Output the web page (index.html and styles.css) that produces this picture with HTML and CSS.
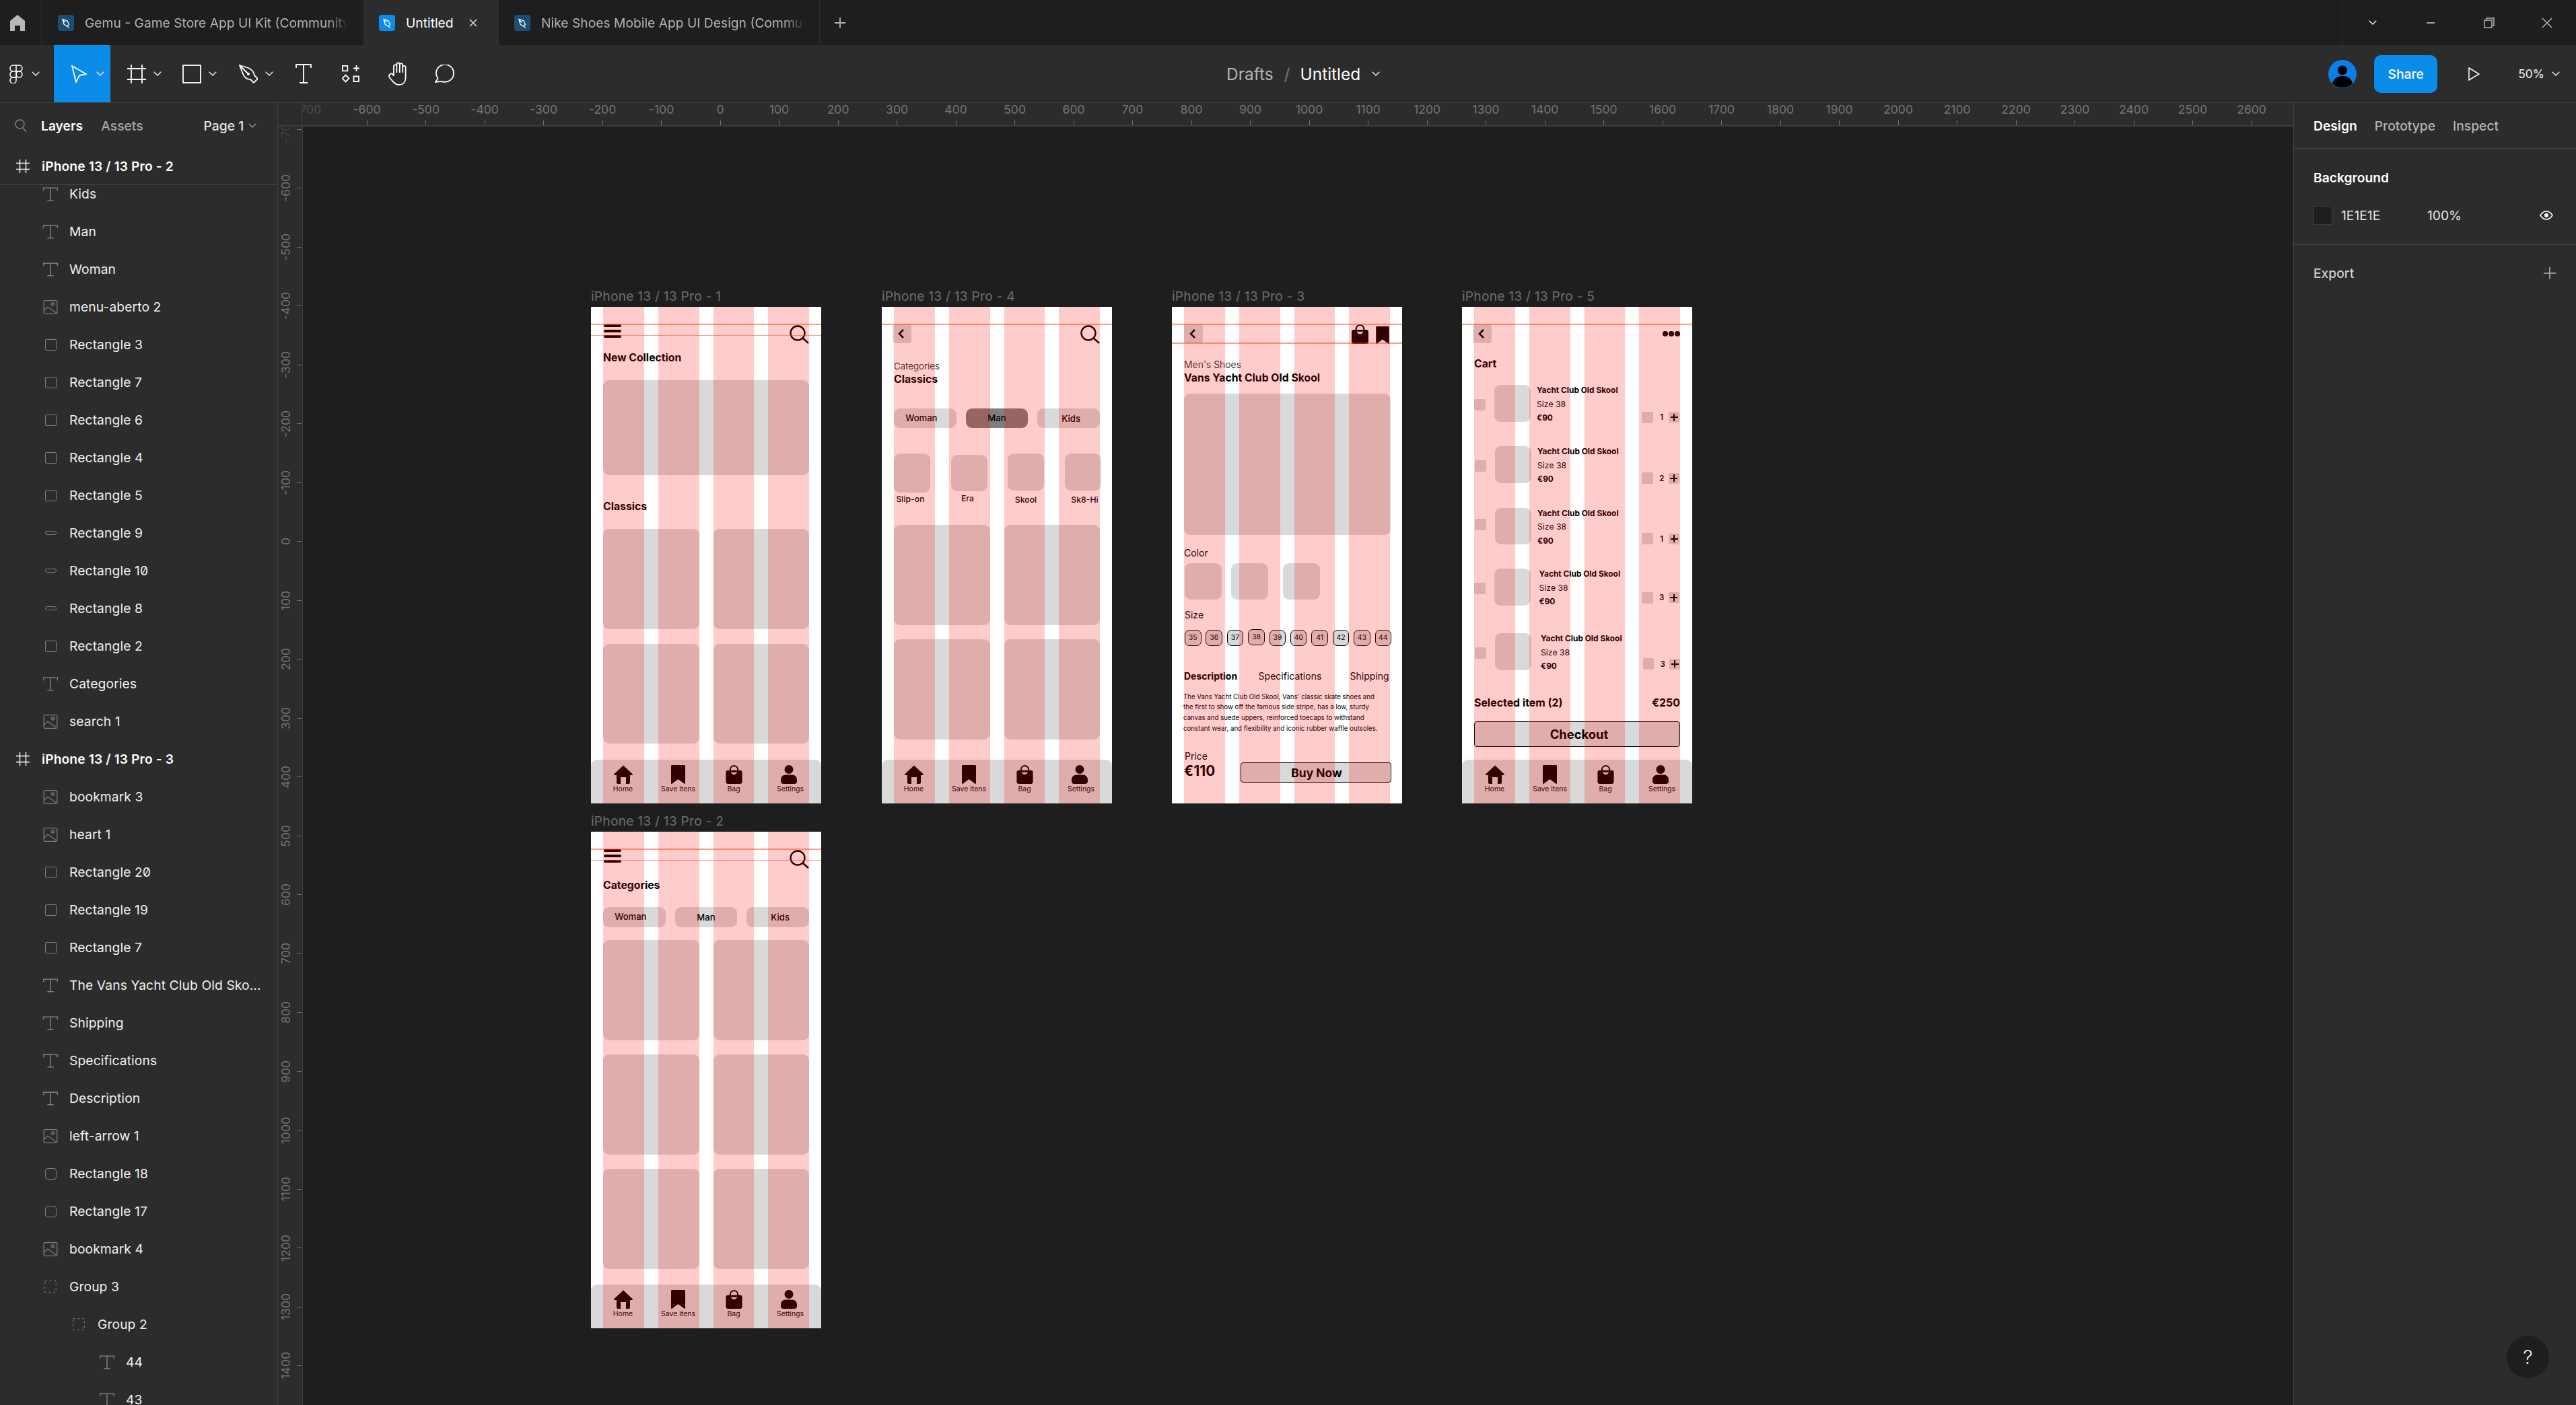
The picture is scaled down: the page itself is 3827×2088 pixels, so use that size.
FILE: index.html
```html
<!DOCTYPE html>
<html lang="en">
<head>
<meta charset="utf-8">
<title>Untitled - Figma</title>
<link rel="stylesheet" href="styles.css">
</head>
<body>
<svg class="sprite" width="0" height="0" aria-hidden="true">
  <defs>
    <symbol id="i-home" viewBox="0 0 28 28"><path d="M14 .5 27.6 13.2c.6.7.2 1.8-.8 1.8H24v11c0 1.2-.8 2-2 2h-4V18h-8v10H6c-1.2 0-2-.8-2-2V15H1.200C.2 15-.2 13.900.4 13.200Z"/></symbol>
    <symbol id="i-book" viewBox="0 0 21 28"><path d="M1.500 0h18c.9 0 1.500.6 1.500 1.500V27c0 .8-.7 1.200-1.400.8L10.500 21 1.400 27.800C.7 28.200 0 27.800 0 27V1.500C0 .6.600 0 1.500 0Z"/></symbol>
    <symbol id="i-bag" viewBox="0 0 25 29"><path fill-rule="evenodd" d="M3 8h19c1.800 0 3 1.200 3 3v15c0 1.800-1.200 3-3 3H3c-1.800 0-3-1.200-3-3V11c0-1.800 1.200-3 3-3Zm4.500 2.500c1.200 2.700 3 4 5 4s3.800-1.300 5-4c-3.300 1-6.700 1-10 0Z"/><path d="M6.800 9.500C5.800 4.500 8.500 1 12.500 1s6.700 3.500 5.700 8.500" fill="none" stroke="currentColor" stroke-width="2"/></symbol>
    <symbol id="i-user" viewBox="0 0 24 28"><circle cx="12" cy="6.500" r="6.500"/><path d="M0 22c0-4.500 3-7.500 7-7.500h10c4 0 7 3 7 7.500v2c0 2.500-1.500 4-4 4H4c-2.500 0-4-1.500-4-4Z"/></symbol>
    <symbol id="i-search" viewBox="0 0 29 28"><circle cx="12" cy="12" r="10.500" fill="none" stroke="currentColor" stroke-width="2.400"/><path d="M19.500 19.500 28 27" fill="none" stroke="currentColor" stroke-width="2.400"/></symbol>
    <symbol id="i-t" viewBox="0 0 19 18"><path d="M.7 4.500V1h17.600v3.500M9.500 1v16M5.500 17h8" fill="none" stroke="currentColor" stroke-width="1.300"/></symbol>
    <symbol id="i-img" viewBox="0 0 21 21"><rect x=".7" y=".7" width="19.600" height="19.600" rx="1.500" fill="none" stroke="currentColor" stroke-width="1.300"/><circle cx="14" cy="6" r="2" fill="none" stroke="currentColor" stroke-width="1.300"/><path d="m1 15 5.500-5L19 19" fill="none" stroke="currentColor" stroke-width="1.300"/></symbol>
    <symbol id="i-group" viewBox="0 0 18 18"><rect x=".7" y=".7" width="16.600" height="16.600" fill="none" stroke="currentColor" stroke-width="1.300" stroke-dasharray="2.500 4.400" stroke-dashoffset="0"/></symbol>
    <symbol id="i-chev" viewBox="0 0 12 7"><path d="m.7.7 5.300 5.300L11.300.7" fill="none" stroke="currentColor" stroke-width="1.500"/></symbol>
    <symbol id="i-hash" viewBox="0 0 20 20"><path d="M0 5.500h20M0 14.500h20M5.500 0v20M14.500 0v20" fill="none" stroke="currentColor" stroke-width="1.400"/></symbol>
    <symbol id="i-leaf" viewBox="0 0 24 24"><rect width="24" height="24" rx="4" fill="currentColor"/><path d="M7 6.500l7 2.500 2.500 5.500-3 2.500-4.500-3ZM7 6.500l4 5M13.500 17l3.500 2" fill="none" stroke="#fff" stroke-width="1.300"/></symbol>
  </defs>
</svg>

<div class="app">
  <header class="tabbar">
    <div class="home-tab">
      <svg class="home-icon" viewBox="0 0 22 24"><path d="M11 0 22 9v15h-7v-8H7v8H0V9Z"/></svg>
    </div>
    <div class="tab tab-wide">
      <svg class="file-icon file-dim"><use href="#i-leaf"/></svg>
      <span class="tab-name tab-fade">Gemu - Game Store App UI Kit (Community)</span>
    </div>
    <div class="tab tab-active">
      <svg class="file-icon file-on"><use href="#i-leaf"/></svg>
      <span class="tab-name tab-name-on">Untitled</span>
      <svg class="tab-close" viewBox="0 0 12 12"><path d="m1 1 10 10M11 1 1 11" fill="none" stroke="currentColor" stroke-width="1.500"/></svg>
    </div>
    <div class="tab tab-wide tab-last">
      <svg class="file-icon file-dim"><use href="#i-leaf"/></svg>
      <span class="tab-name tab-fade">Nike Shoes Mobile App UI Design (Community)</span>
    </div>
    <svg class="tab-plus" viewBox="0 0 16 16"><path d="M8 0v16M0 8h16" fill="none" stroke="currentColor" stroke-width="1.800"/></svg>
    <div class="win">
      <div class="win-btn"><svg class="chev"><use href="#i-chev"/></svg></div>
      <div class="win-btn"><svg class="win-icon" viewBox="0 0 16 16"><path d="M2 8h12" fill="none" stroke="currentColor" stroke-width="1.800"/></svg></div>
      <div class="win-btn"><svg class="win-icon" viewBox="0 0 16 16"><path d="M1 4h11v11H1ZM4 4V1h11v11h-3" fill="none" stroke="currentColor" stroke-width="1.500"/></svg></div>
      <div class="win-btn"><svg class="win-icon" viewBox="0 0 16 16"><path d="m1 1 14 14M15 1 1 15" fill="none" stroke="currentColor" stroke-width="1.500"/></svg></div>
    </div>
  </header>

  <div class="toolbar">
    <div class="tools">
      <div class="tool tool-logo">
        <svg class="ic ic-logo" viewBox="0 0 20 28"><path d="M10 1H5.500a4.500 4.500 0 0 0 0 9H10ZM10 1h4.500a4.500 4.500 0 0 1 0 9H10ZM10 10H5.500a4.500 4.500 0 0 0 0 9H10Z"/><circle cx="14.500" cy="14.500" r="4.500"/><path d="M10 19H5.500a4.500 4.500 0 1 0 4.500 4.500Z"/></svg>
        <svg class="chev"><use href="#i-chev"/></svg>
      </div>
      <div class="tool tool-on">
        <svg class="ic ic-cursor" viewBox="0 0 23 26"><path d="M1 1 22 13l-10 2-5 10Z"/></svg>
        <svg class="chev"><use href="#i-chev"/></svg>
      </div>
      <div class="tool">
        <svg class="ic" viewBox="0 0 28 28"><path d="M0 6h28M0 22h28M6 0v28M22 0v28"/></svg>
        <svg class="chev"><use href="#i-chev"/></svg>
      </div>
      <div class="tool">
        <svg class="ic" viewBox="0 0 28 28"><rect x="1" y="1" width="26" height="26"/></svg>
        <svg class="chev"><use href="#i-chev"/></svg>
      </div>
      <div class="tool">
        <svg class="ic" viewBox="0 0 28 28"><path d="M1 1 14 5c5 2 8 6 9 11l5 5-6 6-5-5c-5 0-9-3-11-8ZM1 1l13 13"/><circle class="ic-dot" cx="14" cy="14" r="2"/></svg>
        <svg class="chev"><use href="#i-chev"/></svg>
      </div>
      <div class="tool tool-plain">
        <svg class="ic ic-text" viewBox="0 0 24 29"><path d="M1 6V1h22v5M12 1v27M6 28h12"/></svg>
      </div>
      <div class="tool tool-plain">
        <svg class="ic ic-comps" viewBox="0 0 26 26"><path d="M.800.800h7.500v7.500H.800ZM17 4.500h9M21.500 0v9M5.500 14.500l5 5-5 5-5-5ZM17.500 16.500h7.500V24h-7.500Z"/></svg>
      </div>
      <div class="tool tool-plain">
        <svg class="ic ic-hand" viewBox="0 0 31 35"><path d="M9 20V6.500a2.200 2.200 0 0 1 4.400 0V3.500a2.200 2.200 0 0 1 4.400 0V4.500a2.200 2.200 0 0 1 4.400 0V8a2.200 2.200 0 0 1 4.400 0v16c0 6-4 10-9 10-5 0-7-2-10-5l-5-6c-2-3 1.500-7 4.500-5L9 21M13.400 5v11M17.800 4v12M22.200 6v10"/></svg>
      </div>
      <div class="tool tool-plain">
        <svg class="ic ic-comment" viewBox="0 0 31 27"><path d="M1 26 4.500 20.500A13 13 0 1 1 12 25.500C8 24.500 5 25.500 1 26Z"/></svg>
      </div>
    </div>
    <div class="crumbs">
      <span class="crumb-dim">Drafts</span>
      <span class="crumb-sep">/</span>
      <span class="crumb-on">Untitled</span>
      <svg class="chev"><use href="#i-chev"/></svg>
    </div>
    <div class="actions">
      <svg class="avatar" viewBox="0 0 42 42"><circle cx="21" cy="21" r="21" fill="#0a7fe8"/><circle cx="21" cy="15.500" r="7"/><path d="M6 35c2-8 8-11 15-11s13 3 15 11a21 21 0 0 1-30 0Z"/></svg>
      <div class="share">Share</div>
      <svg class="play" viewBox="0 0 17 20"><path d="M1 1 16 10 1 19Z"/></svg>
      <span class="zoom-level">50%</span>
      <svg class="chev"><use href="#i-chev"/></svg>
    </div>
  </div>

  <div class="work">
    <aside class="left">
      <div class="left-tabs">
        <svg class="search-mini" viewBox="0 0 18 20"><circle cx="7.500" cy="7.500" r="6.500"/><path d="m12 13 5 6"/></svg>
        <span class="lt-on">Layers</span>
        <span class="lt-off">Assets</span>
        <span class="lt-page">Page 1</span>
        <svg class="chev chev-dim"><use href="#i-chev"/></svg>
      </div>
      <div class="row row-head row-sticky"><svg class="ri ri-hash"><use href="#i-hash"/></svg><span>iPhone 13 / 13 Pro - 2</span></div>
      <div class="layers">
        <div class="layers-inner">
          <div class="row"><svg class="ri ri-t"><use href="#i-t"/></svg><span>Kids</span></div>
          <div class="row"><svg class="ri ri-t"><use href="#i-t"/></svg><span>Man</span></div>
          <div class="row"><svg class="ri ri-t"><use href="#i-t"/></svg><span>Woman</span></div>
          <div class="row"><svg class="ri ri-img"><use href="#i-img"/></svg><span>menu-aberto 2</span></div>
          <div class="row"><i class="ri-rect"></i><span>Rectangle 3</span></div>
          <div class="row"><i class="ri-rect"></i><span>Rectangle 7</span></div>
          <div class="row"><i class="ri-rect"></i><span>Rectangle 6</span></div>
          <div class="row"><i class="ri-rect"></i><span>Rectangle 4</span></div>
          <div class="row"><i class="ri-rect"></i><span>Rectangle 5</span></div>
          <div class="row"><i class="ri-rect ri-thin"></i><span>Rectangle 9</span></div>
          <div class="row"><i class="ri-rect ri-thin"></i><span>Rectangle 10</span></div>
          <div class="row"><i class="ri-rect ri-thin"></i><span>Rectangle 8</span></div>
          <div class="row"><i class="ri-rect"></i><span>Rectangle 2</span></div>
          <div class="row"><svg class="ri ri-t"><use href="#i-t"/></svg><span>Categories</span></div>
          <div class="row"><svg class="ri ri-img"><use href="#i-img"/></svg><span>search 1</span></div>
          <div class="row row-head"><svg class="ri ri-hash"><use href="#i-hash"/></svg><span>iPhone 13 / 13 Pro - 3</span></div>
          <div class="row"><svg class="ri ri-img"><use href="#i-img"/></svg><span>bookmark 3</span></div>
          <div class="row"><svg class="ri ri-img"><use href="#i-img"/></svg><span>heart 1</span></div>
          <div class="row"><i class="ri-rect"></i><span>Rectangle 20</span></div>
          <div class="row"><i class="ri-rect"></i><span>Rectangle 19</span></div>
          <div class="row"><i class="ri-rect"></i><span>Rectangle 7</span></div>
          <div class="row"><svg class="ri ri-t"><use href="#i-t"/></svg><span>The Vans Yacht Club Old Sko...</span></div>
          <div class="row"><svg class="ri ri-t"><use href="#i-t"/></svg><span>Shipping</span></div>
          <div class="row"><svg class="ri ri-t"><use href="#i-t"/></svg><span>Specifications</span></div>
          <div class="row"><svg class="ri ri-t"><use href="#i-t"/></svg><span>Description</span></div>
          <div class="row"><svg class="ri ri-img"><use href="#i-img"/></svg><span>left-arrow 1</span></div>
          <div class="row"><i class="ri-rect ri-round"></i><span>Rectangle 18</span></div>
          <div class="row"><i class="ri-rect ri-round"></i><span>Rectangle 17</span></div>
          <div class="row"><svg class="ri ri-img"><use href="#i-img"/></svg><span>bookmark 4</span></div>
          <div class="row"><svg class="ri ri-grp"><use href="#i-group"/></svg><span>Group 3</span></div>
          <div class="row row-l2"><svg class="ri ri-grp"><use href="#i-group"/></svg><span>Group 2</span></div>
          <div class="row row-l3"><svg class="ri ri-t"><use href="#i-t"/></svg><span>44</span></div>
          <div class="row row-l3"><svg class="ri ri-t"><use href="#i-t"/></svg><span>43</span></div>
        </div>
      </div>
    </aside>

    <main class="center">
      <div class="hruler-row">
        <div class="corner"></div>
        <div class="hruler">
          <div class="hr-strip">
            <div class="hc"><span>-700</span><i></i></div><div class="hc"><span>-600</span><i></i></div><div class="hc"><span>-500</span><i></i></div><div class="hc"><span>-400</span><i></i></div><div class="hc"><span>-300</span><i></i></div><div class="hc"><span>-200</span><i></i></div><div class="hc"><span>-100</span><i></i></div><div class="hc"><span>0</span><i></i></div><div class="hc"><span>100</span><i></i></div><div class="hc"><span>200</span><i></i></div><div class="hc"><span>300</span><i></i></div><div class="hc"><span>400</span><i></i></div><div class="hc"><span>500</span><i></i></div><div class="hc"><span>600</span><i></i></div><div class="hc"><span>700</span><i></i></div><div class="hc"><span>800</span><i></i></div><div class="hc"><span>900</span><i></i></div><div class="hc"><span>1000</span><i></i></div><div class="hc"><span>1100</span><i></i></div><div class="hc"><span>1200</span><i></i></div><div class="hc"><span>1300</span><i></i></div><div class="hc"><span>1400</span><i></i></div><div class="hc"><span>1500</span><i></i></div><div class="hc"><span>1600</span><i></i></div><div class="hc"><span>1700</span><i></i></div><div class="hc"><span>1800</span><i></i></div><div class="hc"><span>1900</span><i></i></div><div class="hc"><span>2000</span><i></i></div><div class="hc"><span>2100</span><i></i></div><div class="hc"><span>2200</span><i></i></div><div class="hc"><span>2300</span><i></i></div><div class="hc"><span>2400</span><i></i></div><div class="hc"><span>2500</span><i></i></div><div class="hc"><span>2600</span><i></i></div>
          </div>
        </div>
      </div>
      <div class="canvas-row">
        <div class="vruler">
          <div class="vr-strip">
            <div class="vc"><span>-700</span><i></i></div><div class="vc"><span>-600</span><i></i></div><div class="vc"><span>-500</span><i></i></div><div class="vc"><span>-400</span><i></i></div><div class="vc"><span>-300</span><i></i></div><div class="vc"><span>-200</span><i></i></div><div class="vc"><span>-100</span><i></i></div><div class="vc"><span>0</span><i></i></div><div class="vc"><span>100</span><i></i></div><div class="vc"><span>200</span><i></i></div><div class="vc"><span>300</span><i></i></div><div class="vc"><span>400</span><i></i></div><div class="vc"><span>500</span><i></i></div><div class="vc"><span>600</span><i></i></div><div class="vc"><span>700</span><i></i></div><div class="vc"><span>800</span><i></i></div><div class="vc"><span>900</span><i></i></div><div class="vc"><span>1000</span><i></i></div><div class="vc"><span>1100</span><i></i></div><div class="vc"><span>1200</span><i></i></div><div class="vc"><span>1300</span><i></i></div><div class="vc"><span>1400</span><i></i></div>
          </div>
        </div>
        <div class="canvas">

          <!-- Frame 1 -->
          <section class="frame frame-a">
            <div class="frame-label">iPhone 13 / 13 Pro - 1</div>
            <div class="fhead">
              <div class="burger"><i></i><i></i><i></i></div>
              <svg class="f-search"><use href="#i-search"/></svg>
            </div>
            <h2 class="h-bold mt-a">New Collection</h2>
            <div class="card banner"></div>
            <h2 class="h-bold mt-b">Classics</h2>
            <div class="cards cards-a">
              <div class="card"></div><div class="card"></div><div class="card"></div><div class="card"></div>
            </div>
            <nav class="fnav">
              <div class="ni"><svg class="ni-home"><use href="#i-home"/></svg><span>Home</span></div>
              <div class="ni"><svg class="ni-book"><use href="#i-book"/></svg><span>Save itens</span></div>
              <div class="ni"><svg class="ni-bag"><use href="#i-bag"/></svg><span>Bag</span></div>
              <div class="ni ni-last"><svg class="ni-user"><use href="#i-user"/></svg><span>Settings</span></div>
            </nav>
            <div class="overlay"><b></b><b></b><b></b><b></b></div>
            <i class="guide guide-1"></i><i class="guide guide-2"></i>
          </section>

          <!-- Frame 4 -->
          <section class="frame frame-b">
            <div class="frame-label">iPhone 13 / 13 Pro - 4</div>
            <div class="fhead">
              <div class="back"><svg viewBox="0 0 28 28"><path d="M16 8l-6 6 6 6"/></svg></div>
              <svg class="f-search"><use href="#i-search"/></svg>
            </div>
            <p class="sub sub-cat mt-c">Categories</p>
            <h2 class="h-bold mt-d">Classics</h2>
            <div class="pills mt-e">
              <div class="pill"><span class="pw">Woman</span></div>
              <div class="pill pill-on"><span>Man</span></div>
              <div class="pill"><span class="pk">Kids</span></div>
            </div>
            <div class="thumbs">
              <div class="th th-1"><div class="card"></div><span>Slip-on</span></div>
              <div class="th th-2"><div class="card"></div><span>Era</span></div>
              <div class="th th-3"><div class="card"></div><span>Skool</span></div>
              <div class="th th-4"><div class="card"></div><span>Sk8-Hi</span></div>
            </div>
            <div class="cards cards-b">
              <div class="card"></div><div class="card"></div><div class="card"></div><div class="card"></div>
            </div>
            <nav class="fnav">
              <div class="ni"><svg class="ni-home"><use href="#i-home"/></svg><span>Home</span></div>
              <div class="ni"><svg class="ni-book"><use href="#i-book"/></svg><span>Save itens</span></div>
              <div class="ni"><svg class="ni-bag"><use href="#i-bag"/></svg><span>Bag</span></div>
              <div class="ni ni-last"><svg class="ni-user"><use href="#i-user"/></svg><span>Settings</span></div>
            </nav>
            <div class="overlay"><b></b><b></b><b></b><b></b></div>
            <i class="guide guide-1"></i>
          </section>

          <!-- Frame 3 -->
          <section class="frame frame-c">
            <div class="frame-label">iPhone 13 / 13 Pro - 3</div>
            <div class="fhead fhead-c">
              <div class="back"><svg viewBox="0 0 28 28"><path d="M16 8l-6 6 6 6"/></svg></div>
              <div class="head-ics">
                <svg class="hi-bag"><use href="#i-bag"/></svg>
                <svg class="hi-book"><use href="#i-book"/></svg>
              </div>
            </div>
            <p class="sub sub-light mt-f">Men's Shoes</p>
            <h2 class="h-bold mt-d">Vans Yacht Club Old Skool</h2>
            <div class="card hero"></div>
            <p class="sub mt-g">Color</p>
            <div class="swatches">
              <div class="card"></div><div class="card"></div><div class="card"></div>
            </div>
            <p class="sub mt-h">Size</p>
            <div class="sizes">
              <span>35</span><span>36</span><span>37</span><span class="up">38</span><span>39</span><span>40</span><span>41</span><span>42</span><span>43</span><span>44</span>
            </div>
            <div class="dtabs">
              <strong>Description</strong><span>Specifications</span><span>Shipping</span>
            </div>
            <p class="para">The Vans Yacht Club Old Skool, Vans' classic skate shoes and<br>the first to show off the famous side stripe, has a low, sturdy<br>canvas and suede uppers, reinforced toecaps to withstand<br>constant wear, and flexibility and iconic rubber waffle outsoles.</p>
            <div class="buy">
              <div class="price"><p class="sub">Price</p><strong>€110</strong></div>
              <div class="btn btn-buy">Buy Now</div>
            </div>
            <div class="overlay"><b></b><b></b><b></b><b></b></div>
            <i class="guide guide-1"></i><i class="guide guide-3"></i>
          </section>

          <!-- Frame 5 -->
          <section class="frame frame-d">
            <div class="frame-label">iPhone 13 / 13 Pro - 5</div>
            <div class="fhead">
              <div class="back"><svg viewBox="0 0 28 28"><path d="M16 8l-6 6 6 6"/></svg></div>
              <div class="dots"><i></i><i></i><i></i></div>
            </div>
            <h2 class="h-bold mt-i">Cart</h2>
            <div class="ci ci-1"><i class="chk"></i><div class="card ci-th"></div><div class="ci-text"><strong>Yacht Club Old Skool</strong><span>Size 38</span><strong>€90</strong></div><div class="qty"><i class="minus"></i><b>1</b><i class="plus"></i></div></div>
            <div class="ci ci-2"><i class="chk"></i><div class="card ci-th"></div><div class="ci-text"><strong>Yacht Club Old Skool</strong><span>Size 38</span><strong>€90</strong></div><div class="qty"><i class="minus"></i><b>2</b><i class="plus"></i></div></div>
            <div class="ci ci-3"><i class="chk"></i><div class="card ci-th"></div><div class="ci-text"><strong>Yacht Club Old Skool</strong><span>Size 38</span><strong>€90</strong></div><div class="qty"><i class="minus"></i><b>1</b><i class="plus"></i></div></div>
            <div class="ci ci-4"><i class="chk"></i><div class="card ci-th"></div><div class="ci-text"><strong>Yacht Club Old Skool</strong><span>Size 38</span><strong>€90</strong></div><div class="qty"><i class="minus"></i><b>3</b><i class="plus"></i></div></div>
            <div class="ci ci-5"><i class="chk"></i><div class="card ci-th"></div><div class="ci-text"><strong>Yacht Club Old Skool</strong><span>Size 38</span><strong>€90</strong></div><div class="qty"><i class="minus"></i><b>3</b><i class="plus"></i></div></div>
            <div class="total"><strong>Selected item (2)</strong><strong>€250</strong></div>
            <div class="btn btn-check">Checkout</div>
            <nav class="fnav">
              <div class="ni"><svg class="ni-home"><use href="#i-home"/></svg><span>Home</span></div>
              <div class="ni"><svg class="ni-book"><use href="#i-book"/></svg><span>Save itens</span></div>
              <div class="ni"><svg class="ni-bag"><use href="#i-bag"/></svg><span>Bag</span></div>
              <div class="ni ni-last"><svg class="ni-user"><use href="#i-user"/></svg><span>Settings</span></div>
            </nav>
            <div class="overlay"><b></b><b></b><b></b><b></b></div>
            <i class="guide guide-1"></i>
          </section>

          <!-- Frame 2 -->
          <section class="frame frame-e">
            <div class="frame-label">iPhone 13 / 13 Pro - 2</div>
            <div class="fhead">
              <div class="burger"><i></i><i></i><i></i></div>
              <svg class="f-search"><use href="#i-search"/></svg>
            </div>
            <h2 class="h-bold mt-j">Categories</h2>
            <div class="pills mt-k">
              <div class="pill"><span class="pw">Woman</span></div>
              <div class="pill"><span>Man</span></div>
              <div class="pill"><span class="pk">Kids</span></div>
            </div>
            <div class="cards cards-e">
              <div class="card"></div><div class="card"></div><div class="card"></div><div class="card"></div><div class="card"></div><div class="card"></div>
            </div>
            <nav class="fnav">
              <div class="ni"><svg class="ni-home"><use href="#i-home"/></svg><span>Home</span></div>
              <div class="ni"><svg class="ni-book"><use href="#i-book"/></svg><span>Save itens</span></div>
              <div class="ni"><svg class="ni-bag"><use href="#i-bag"/></svg><span>Bag</span></div>
              <div class="ni ni-last"><svg class="ni-user"><use href="#i-user"/></svg><span>Settings</span></div>
            </nav>
            <div class="overlay"><b></b><b></b><b></b><b></b></div>
            <i class="guide guide-1"></i><i class="guide guide-2"></i>
          </section>

        </div>
      </div>
    </main>

    <aside class="right">
      <div class="rt-tabs">
        <span class="rt-on">Design</span><span>Prototype</span><span>Inspect</span>
      </div>
      <div class="rt-bg">
        <h3>Background</h3>
        <div class="bg-row">
          <i class="swatch"></i>
          <span class="hex">1E1E1E</span>
          <span class="pct">100%</span>
          <svg class="eye" viewBox="0 0 20 14"><path d="M1 7c2.500-4 5.500-6 9-6s6.500 2 9 6c-2.500 4-5.500 6-9 6s-6.500-2-9-6Z" fill="none" stroke="currentColor" stroke-width="1.500"/><circle cx="10" cy="7" r="3" fill="currentColor"/></svg>
        </div>
      </div>
      <div class="rt-export">
        <span>Export</span>
        <svg class="exp-plus" viewBox="0 0 18 18"><path d="M9 0v18M0 9h18" fill="none" stroke="currentColor" stroke-width="1.500"/></svg>
      </div>
      <div class="help">?</div>
    </aside>
  </div>
</div>
</body>
</html>
```

FILE: styles.css
```css
* { box-sizing: border-box; }
html, body { margin: 0; padding: 0; background: #1e1e1e; }
body { font-family: Inter, "Noto Sans", sans-serif; color: #fff; }
h2, h3, p { margin: 0; }
.sprite { position: absolute; }

.app { width: 3827px; height: 2088px; display: flex; flex-direction: column; overflow: hidden; }

/* Tab bar */
.tabbar { height: 67px; flex: none; display: flex; align-items: center; background: #1e1e1e; font-size: 19.25px; }
.home-tab { width: 62px; height: 67px; display: flex; align-items: center; justify-content: center; border-right: 1px solid #2c2c2c; }
.home-icon { width: 22px; height: 24px; fill: #b8b8b8; margin-right: 10px; }
.tab { height: 67px; display: flex; align-items: center; padding-left: 24px; color: #b3b3b3; }
.tab-wide { width: 478px; }
.tab-last { width: 477px; border-right: 1px solid #2c2c2c; padding-left: 23px; }
.tab-active { width: 201px; background: #2c2c2c; padding-left: 23px; }
.file-icon { width: 24px; height: 24px; flex: none; margin-right: 16px; }
.file-on { color: #0c8ce9; }
.file-dim { color: #1a4e74; }
.tab-name { white-space: nowrap; overflow: hidden; width: 392px; }
.tab-fade { -webkit-mask-image: linear-gradient(to right, #000 92%, transparent); mask-image: linear-gradient(to right, #000 92%, transparent); }
.tab-name-on { width: auto; color: #fff; }
.tab-close { width: 12px; height: 12px; margin-left: 23px; color: #e0e0e0; }
.tab-plus { width: 16px; height: 16px; margin-left: 22px; color: #b3b3b3; }
.win { margin-left: auto; width: 347px; height: 67px; display: flex; border-left: 1px solid #2c2c2c; padding-left: 1px; }
.win-btn { width: 87px; display: flex; align-items: center; justify-content: center; color: #b3b3b3; }
.win-icon { width: 16px; height: 16px; }

/* Toolbar */
.toolbar { height: 86px; flex: none; background: #2c2c2c; border-bottom: 1px solid #3d3d3d; display: grid; grid-template-columns: 1822px auto 1fr; align-items: center; }
.chev { width: 12px; height: 7px; color: #e6e6e6; flex: none; }
.tools { display: flex; height: 85px; }
.tool { width: 84px; display: flex; align-items: center; padding-left: 23px; gap: 11px; color: #fff; }
.tool-logo { width: 80px; padding-left: 14px; gap: 13px; }
.tool-on { background: #0c8ce9; padding-left: 26px; gap: 14px; }
.tool-plain { width: 70px; padding-left: 0; justify-content: center; }
.tool:nth-child(3) { padding-left: 25px; }
.ic { width: 28px; height: 28px; fill: none; stroke: #fff; stroke-width: 1.8; flex: none; }
.ic-dot { fill: #fff; stroke: none; }
.ic-logo { width: 20px; stroke-width: 1.5; }
.ic-cursor { width: 23px; height: 26px; }
.ic-text { width: 24px; height: 29px; }
.ic-comps { width: 26px; height: 26px; }
.ic-hand { width: 31px; height: 35px; }
.ic-comment { width: 31px; height: 27px; }

.crumbs { display: flex; align-items: center; font-size: 24.5px; height: 85px; }
.crumb-dim { color: #b3b3b3; }
.crumb-sep { color: #777; margin: 0 15px 0 16px; }
.crumb-on { color: #fff; }
.crumbs .chev { margin-left: 17px; }
.actions { display: flex; align-items: center; justify-content: flex-end; height: 85px; padding-right: 24px; }
.avatar { width: 42px; height: 42px; margin-right: 26px; }
.share { width: 94px; height: 56px; border-radius: 10px; background: #0c8ce9; display: flex; align-items: center; justify-content: center; font-size: 19.25px; font-weight: 500; }
.play { width: 17px; height: 20px; fill: none; stroke: #fff; stroke-width: 1.500; margin: 0 57px 0 46px; }
.zoom-level { font-size: 17.500px; color: #f0f0f0; margin-right: 11px; }

/* Work area */
.work { flex: 1; display: flex; min-height: 0; }

/* Left panel */
.left { width: 413px; flex: none; background: #2c2c2c; border-right: 1px solid #444; display: flex; flex-direction: column; font-size: 19.25px; overflow: hidden; }
.left-tabs { height: 67px; flex: none; display: flex; align-items: center; padding-left: 22px; }
.search-mini { width: 18px; height: 20px; fill: none; stroke: #8c8c8c; stroke-width: 1.300; margin-right: 21px; flex: none; }
.lt-on { font-weight: 600; color: #fff; }
.lt-off { color: #a6a6a6; margin-left: 27px; font-weight: 500; }
.lt-page { color: #e6e6e6; margin-left: 90px; font-weight: 500; }
.chev-dim { color: #8c8c8c; margin-left: 7px; }

.row { height: 56px; flex: none; display: flex; align-items: center; padding-left: 61px; gap: 14px; color: #f0f0f0; letter-spacing: .1px; white-space: nowrap; font-feature-settings: "zero" 1; }
.row-l2 { padding-left: 103px; }
.row-l3 { padding-left: 145px; }
.row-head { padding-left: 20px; font-weight: 600; color: #fff; }
.row-sticky { height: 55px; border-bottom: 1px solid #444; }
.row > svg, .row > i { flex: none; }
.ri { width: 28px; height: 21px; color: #7d7d7d; }
.ri-hash { color: #fff; width: 20px; height: 20px; margin: 0 4px; }
.ri-grp { height: 18px; }
.ri-rect { width: 17px; height: 17px; border: 1.500px solid #7d7d7d; border-radius: 2px; margin: 0 5.500px; }
.ri-round { border-radius: 4px; }
.ri-thin { height: 6px; border-radius: 3px; }
.layers { flex: 1; overflow: hidden; }
.layers-inner { margin-top: -15px; }

/* Center */
.center { flex: 1; min-width: 0; display: flex; flex-direction: column; }
.hruler-row { height: 35px; flex: none; display: flex; background: #2c2c2c; border-bottom: 2px solid #3d3d3d; }
.corner { width: 36px; flex: none; background: #2c2c2c; border-right: 1px solid #444; }
.hruler { flex: 1; overflow: hidden; }
.hr-strip { display: flex; margin-left: -35.200px; width: 3000px; }
.hc { width: 87.500px; flex: none; display: flex; flex-direction: column; align-items: center; color: #757575; font-size: 17.500px; line-height: 20px; }
.hc i { width: 1px; height: 7px; background: #757575; margin-top: 6px; }
.hc:first-child span { opacity: .4; }
.hc:first-child i { opacity: 0; }

.canvas-row { flex: 1; display: flex; min-height: 0; }
.vruler { width: 37px; flex: none; background: #2c2c2c; overflow: hidden; border-right: 1px solid #3d3d3d; }
.vr-strip { margin-top: -39.500px; }
.vc { height: 87.500px; display: flex; align-items: center; justify-content: flex-end; color: #757575; font-size: 17.500px; line-height: 20px; padding-right: 1px; }
.vc span { writing-mode: vertical-rl; transform: rotate(180deg); margin-right: 6px; }
.vc i { width: 7px; height: 1px; background: #757575; }
.vc:first-child span { opacity: .3; }

.canvas { flex: 1; position: relative; background: #1e1e1e; }

/* Frames */
.frame { position: absolute; width: 342px; height: 738px; background: #fff; color: #000; display: flex; flex-direction: column; }
.frame-a { left: 428px; top: 268px; }
.frame-b { left: 860px; top: 268px; }
.frame-c { left: 1291px; top: 268px; }
.frame-d { left: 1722px; top: 268px; }
.frame-e { left: 428px; top: 1048px; }
.frame-label { position: absolute; left: 0; bottom: 100%; margin-bottom: 6px; color: #6e6e6e; font-size: 19.250px; line-height: 20px; white-space: nowrap; letter-spacing: .2px; }

.overlay { position: absolute; inset: 0; display: grid; grid-template-columns: repeat(4, 1fr); gap: 21px; padding: 0 18px; pointer-events: none; }
.overlay b { background: rgba(255, 0, 0, .2); }
.guide { position: absolute; left: 0; right: 0; height: 1.500px; background: rgba(255, 60, 30, .5); }
.guide-1 { top: 25px; }
.guide-2 { top: 41.500px; }
.guide-3 { top: 53px; }

.fhead { margin-top: 26px; height: 28px; flex: none; padding: 0 18px; display: flex; justify-content: space-between; align-items: flex-start; }
.fhead-c .back { margin-left: 0; }
.burger { width: 26px; display: flex; flex-direction: column; gap: 4px; margin-left: 1px; }
.burger i { height: 4px; background: #000; border-radius: 2px; }
.f-search { width: 29px; height: 28px; color: #000; margin-top: .5px; }
.back { width: 28px; height: 28px; background: #d9d9d9; border-radius: 4px; margin-left: -2px; }
.back svg { display: block; width: 28px; height: 28px; fill: none; stroke: #000; stroke-width: 2.600; }
.dots { display: flex; gap: 1px; margin-top: 10px; }
.dots i { width: 8px; height: 8px; border-radius: 50%; background: #000; }
.head-ics { display: flex; gap: 11px; margin-right: 1px; }
.hi-bag { width: 25px; height: 29px; fill: #000; color: #000; }
.hi-book { width: 20px; height: 26px; fill: #000; margin-top: 3px; }

.h-bold { font-size: 15.750px; line-height: 18px; font-weight: 700; padding-left: 18px; white-space: nowrap; }
.sub { font-size: 14px; line-height: 16px; padding-left: 18px; }
.sub-light { font-weight: 300; }
.sub-cat { font-size: 13.500px; font-weight: 300; }
.mt-a { margin-top: 12.500px; }
.mt-b { margin-top: 38px; }
.mt-c { margin-top: 26px; }
.mt-d { margin-top: 3px; }
.mt-e { margin-top: 33.500px; }
.mt-f { margin-top: 24px; }
.mt-g { margin-top: 19px; }
.mt-h { margin-top: 15px; padding-left: 19px; }
.mt-i { margin-top: 22px; }
.mt-j { margin-top: 16.500px; }
.mt-k { margin-top: 23.500px; }

.card { background: #d9d9d9; border-radius: 9px; }
.banner { height: 141px; margin: 24.500px 18px 0; }
.cards { display: grid; grid-template-columns: 1fr 1fr; column-gap: 21px; padding: 0 18px; flex: none; }
.cards-a { margin-top: 24px; grid-auto-rows: 148.500px; row-gap: 22px; }
.cards-b { grid-auto-rows: 149px; row-gap: 21px; }
.cards-e { margin-top: 19.500px; grid-auto-rows: 148.500px; row-gap: 21.500px; }

.pills { display: grid; grid-template-columns: repeat(3, 1fr); gap: 14px; padding: 0 18px; flex: none; }
.pill { height: 29.500px; background: #d9d9d9; border-radius: 9px; display: flex; align-items: center; justify-content: center; font-size: 13.100px; font-weight: 500; }
.pill-on { background: #7f7f7f; }
.pw { margin-right: 11px; margin-top: -1px; }
.pk { margin-top: 1px; margin-left: 7px; }

.thumbs { display: flex; flex: none; height: 105.500px; margin-top: 38px; padding-left: 18px; gap: 30.500px; font-size: 12.250px; font-weight: 500; line-height: 13px; }
.th { width: 54px; display: flex; flex-direction: column; align-items: center; }
.th .card { width: 54px; height: 55px; flex: none; }
.th span { margin-top: 6.500px; white-space: nowrap; }
.th-1 .card { height: 57.500px; }
.th-1 span { margin-top: 3px; margin-right: 5px; }
.th-2 { margin-top: 2px; }
.th-2 .card { height: 54px; }
.th-2 span { margin-top: 3.500px; margin-right: 4px; }
.th-4 span { margin-left: 6px; }

.fnav { margin-top: auto; height: 65.500px; flex: none; background: #d9d9d9; border-radius: 9px 9px 0 0; display: grid; grid-template-columns: 95px 69px 96px 68px; padding-top: 8px; }
.frame-d .fnav { padding-left: 1px; }
.ni { display: flex; flex-direction: column; align-items: center; font-size: 10.500px; line-height: 13px; color: #000; white-space: nowrap; }
.ni svg { fill: #000; color: #000; height: 28px; flex: none; }
.ni span { margin-top: 1.500px; }
.ni-home { width: 28px; }
.ni-book { width: 21px; }
.ni-bag { width: 25px; }
.ni-user { width: 24px; }
.ni-last span { margin-left: 4px; }

.hero { height: 210.500px; margin: 13.500px 17px 0 18px; flex: none; }
.swatches { display: flex; margin-top: 7px; padding-left: 19px; flex: none; }
.swatches .card { width: 54.500px; height: 54px; }
.swatches .card:nth-child(2) { margin-left: 14.500px; }
.swatches .card:nth-child(3) { margin-left: 22.500px; }
.sizes { display: flex; gap: 6.900px; margin-top: 13.500px; padding-left: 19px; flex: none; }
.sizes span { width: 24.500px; height: 24.500px; background: #d9d9d9; border: 1px solid #000; border-radius: 7px; font-size: 10.500px; display: flex; align-items: center; justify-content: center; }
.sizes .up { transform: translateY(-1px); }
.dtabs { display: flex; margin-top: 37px; padding-left: 18px; font-size: 14px; line-height: 16px; flex: none; white-space: nowrap; }
.dtabs strong { width: 110.600px; font-weight: 700; }
.dtabs span:nth-child(2) { width: 136px; }
.para { margin-top: 14.700px; padding-left: 17px; font-size: 9.700px; line-height: 15.800px; white-space: nowrap; flex: none; }
.buy { display: flex; margin-top: 25px; padding-left: 19px; flex: none; }
.price { width: 83px; }
.price .sub { padding-left: 0; }
.price strong { display: block; font-size: 20.800px; line-height: 22px; margin-top: 3px; margin-left: -1px; }
.btn { background: #d9d9d9; border: 1px solid #000; border-radius: 4px; display: flex; align-items: center; justify-content: center; font-weight: 700; }
.btn-buy { width: 224px; height: 29.500px; margin-top: 17.500px; font-size: 17.400px; padding-left: 2px; }
.btn-check { height: 37.500px; margin: 18px 18px 0; font-size: 18.400px; padding-left: 6px; flex: none; }

.ci { display: flex; height: 54.500px; flex: none; padding-left: 18px; padding-right: 19px; }
.chk { width: 16.500px; height: 17px; background: #d9d9d9; border-radius: 2px; flex: none; margin-top: 21px; }
.ci-th { width: 54px; height: 54.500px; flex: none; margin-left: 13px; }
.ci-text { display: flex; flex-direction: column; margin-left: 9.500px; margin-top: -2px; font-size: 12.250px; line-height: 20.500px; white-space: nowrap; }
.ci-text strong { font-weight: 700; font-size: 11.900px; }
.qty { margin-left: auto; width: 56px; height: 17px; flex: none; display: flex; justify-content: space-between; align-items: center; font-size: 11.500px; }
.qty b { font-weight: 600; margin-left: 3px; }
.minus { width: 16.500px; height: 17px; background: #d9d9d9; border-radius: 2px; }
.plus { width: 16px; height: 16px; background: #d9d9d9; border-radius: 2px; position: relative; }
.plus::before { content: ""; position: absolute; left: 2.500px; right: 2.500px; top: 7px; height: 2px; background: #000; }
.plus::after { content: ""; position: absolute; top: 2.500px; bottom: 2.500px; left: 7px; width: 2px; background: #000; }
.ci-1 { margin-top: 22px; }
.ci-1 .qty { margin-top: 39.500px; }
.ci-2 { margin-top: 36.500px; padding-left: 19px; }
.ci-2 .qty { margin-top: 39px; }
.ci-3 { margin-top: 37px; padding-left: 19px; }
.ci-3 .qty { margin-top: 37.500px; }
.ci-3 .chk { margin-top: 16.500px; }
.ci-4 { margin-top: 36px; }
.ci-4 .ci-text { margin-left: 13px; }
.ci-4 .qty { margin-top: 34.500px; }
.ci-5 { margin-top: 41.500px; padding-left: 19px; padding-right: 17.500px; }
.ci-5 .ci-text { margin-left: 14.500px; }
.ci-5 .qty { margin-top: 37px; }
.total { display: flex; justify-content: space-between; margin-top: 40.500px; padding: 0 18px; font-size: 15.900px; line-height: 18px; flex: none; }

/* Right panel */
.right { width: 420px; flex: none; background: #2c2c2c; border-left: 1px solid #444; position: relative; font-size: 19.250px; }
.rt-tabs { height: 69px; display: flex; align-items: center; gap: 26px; padding-left: 29px; color: #b3b3b3; font-weight: 500; border-bottom: 2px solid #3d3d3d; }
.rt-on { color: #fff; font-weight: 600; }
.rt-bg { height: 142px; padding: 30px 29px 0; border-bottom: 2px solid #3d3d3d; }
.rt-bg h3 { font-size: 19.250px; font-weight: 600; line-height: 24px; color: #fff; }
.bg-row { display: flex; align-items: center; margin-top: 30px; color: #e6e6e6; height: 28px; }
.swatch { width: 28px; height: 28px; background: #1e1e1e; border: 1px solid #3d3d3d; flex: none; }
.hex { margin-left: 13px; width: 128px; }
.pct { width: 167px; }
.eye { width: 20px; height: 14px; color: #fff; }
.rt-export { display: flex; align-items: center; justify-content: space-between; height: 84px; padding: 0 29px; color: #d0d0d0; font-weight: 500; }
.exp-plus { width: 18px; height: 18px; color: #b3b3b3; margin-right: 1px; }
.help { position: absolute; left: 316px; top: 1832px; width: 63px; height: 63px; border-radius: 50%; background: #1e1e1e; display: flex; align-items: center; justify-content: center; font-size: 29px; font-weight: 300; color: #eee; }
```
